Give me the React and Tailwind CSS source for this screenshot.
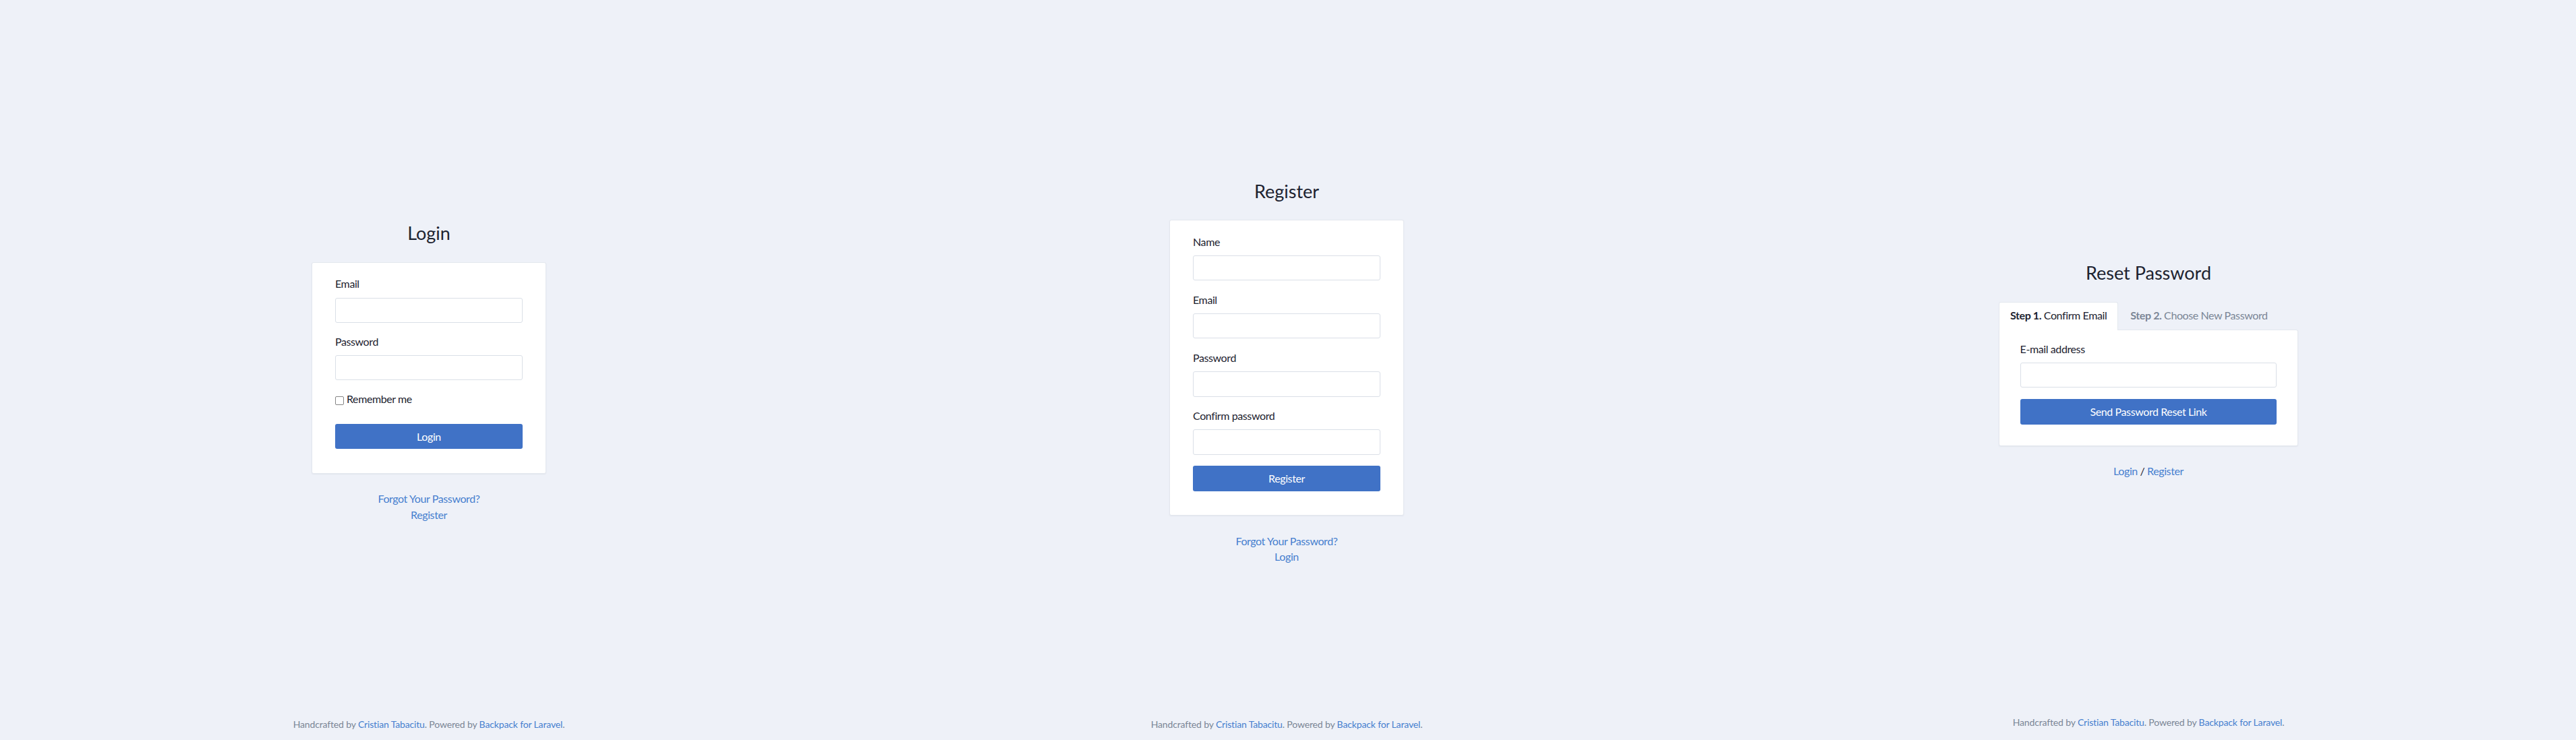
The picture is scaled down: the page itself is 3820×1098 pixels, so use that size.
import React from 'react';

const Label = ({ children, className = '' }) => (
  <div className={`text-[16px] leading-[24px] tracking-[-0.4px] ${className}`}>{children}</div>
);

const Input = ({ className = '' }) => (
  <input
    type="text"
    className={`block w-full rounded-[3px] border border-[#dadfe7] bg-white outline-none ${className}`}
  />
);

const Button = ({ children, className = '' }) => (
  <button
    type="button"
    className={`flex w-full items-center justify-center rounded-[3px] bg-[#4072c6] text-[16px] tracking-[-0.4px] text-white ${className}`}
  >
    {children}
  </button>
);

const Footer = ({ className = '' }) => (
  <div className={`mt-auto text-[14px] leading-[20px] tracking-[-0.15px] text-[#7b8696] ${className}`}>
    Handcrafted by <a className="text-[#467fcf]">Cristian Tabacitu</a>. Powered by{' '}
    <a className="text-[#467fcf]">Backpack for Laravel</a>.
  </div>
);

const Title = ({ children, className = '' }) => (
  <h3 className={`text-[27px] leading-[34px] text-[#1d2330] ${className}`}>{children}</h3>
);

const Card = ({ children, className = '' }) => (
  <div className={`rounded-[3px] border border-[#e3e7ee] bg-white shadow-[0_1px_2px_rgba(40,50,70,0.06)] ${className}`}>
    {children}
  </div>
);

// colonne 1 : login
const LoginColumn = () => (
  <div className="flex flex-1 flex-col items-center pl-[2px] pt-[329px]">
    <Title className="mb-[26px]">Login</Title>
    <Card className="w-[348px] px-[34px] pb-[36px] pt-[19px]">
      <Label className="mb-[8.5px]">Email</Label>
      <Input className="h-[37px]" />
      <Label className="mb-[8.5px] mt-[16px]">Password</Label>
      <Input className="h-[37px]" />
      <div className="mt-[16px] flex items-start text-[16px] leading-[24px] tracking-[-0.4px]">
        <span className="mr-[4px] mt-[8px] block h-[13px] w-[13px] rounded-[2px] border border-[#858585] bg-white" />
        Remember me
      </div>
      <Button className="mt-[25px] h-[37px]">Login</Button>
    </Card>
    <div className="mt-[25.4px] flex flex-col items-center text-[16px] leading-[23.5px] tracking-[-0.4px] text-[#467fcf]">
      <a>Forgot Your Password?</a>
      <a>Register</a>
    </div>
    <Footer className="pb-[13px]" />
  </div>
);

// colonne 2 : register
const RegisterColumn = () => {
  const fields = ['Name', 'Email', 'Password', 'Confirm password'];
  return (
    <div className="flex flex-1 flex-col items-center pl-[4px] pt-[267.4px]">
      <Title className="mb-[25px]">Register</Title>
      <Card className="w-[348px] px-[34px] pb-[35px] pt-[19.5px]">
        {fields.map((f, i) => (
          <div key={f} className={i > 0 ? 'mt-[16.6px]' : ''}>
            <Label className="mb-[8.3px]">{f}</Label>
            <Input className="h-[37.2px]" />
          </div>
        ))}
        <Button className="mt-[16.5px] h-[37.8px]">Register</Button>
      </Card>
      <div className="mt-[26.5px] flex flex-col items-center text-[16px] leading-[23px] tracking-[-0.4px] text-[#467fcf]">
        <a>Forgot Your Password?</a>
        <a>Login</a>
      </div>
      <Footer className="pb-[13px]" />
    </div>
  );
};

// colonne 3 : reset password
const ResetColumn = () => (
  <div className="flex flex-1 flex-col items-center pl-[10px] pt-[388px]">
    <Title className="mb-[25.5px]">Reset Password</Title>
    <div className="w-[444px]">
      <div className="relative z-10 -mb-px flex whitespace-nowrap text-[16px] leading-[24px] tracking-[-0.4px]">
        <div className="rounded-t-[3px] border border-b-0 border-[#e3e7ee] bg-white px-[16px] pb-[9px] pt-[7.7px] text-[#1d2330]">
          <strong>Step 1.</strong> Confirm Email
        </div>
        <div className="border border-transparent px-[17px] pb-[9px] pt-[7.7px] text-[#7b8696]">
          <strong>Step 2.</strong> Choose New Password
        </div>
      </div>
      <Card className="rounded-tl-none px-[30.6px] pb-[31.3px] pt-[15.4px]">
        <Label className="mb-[8.6px]">E-mail address</Label>
        <Input className="h-[37px]" />
        <Button className="mt-[16.7px] h-[37.7px]">Send Password Reset Link</Button>
      </Card>
    </div>
    <div className="mt-[25.4px] text-[16px] leading-[24px] tracking-[-0.4px] text-[#1d2330]">
      <a className="text-[#467fcf]">Login</a> / <a className="text-[#467fcf]">Register</a>
    </div>
    <Footer className="pb-[16px]" />
  </div>
);

export default function App() {
  return (
    <div className="flex h-[1098px] w-full bg-[#eef1f8] font-['Lato','Noto_Sans',sans-serif] text-[#1d2330]">
      <LoginColumn />
      <RegisterColumn />
      <ResetColumn />
    </div>
  );
}
